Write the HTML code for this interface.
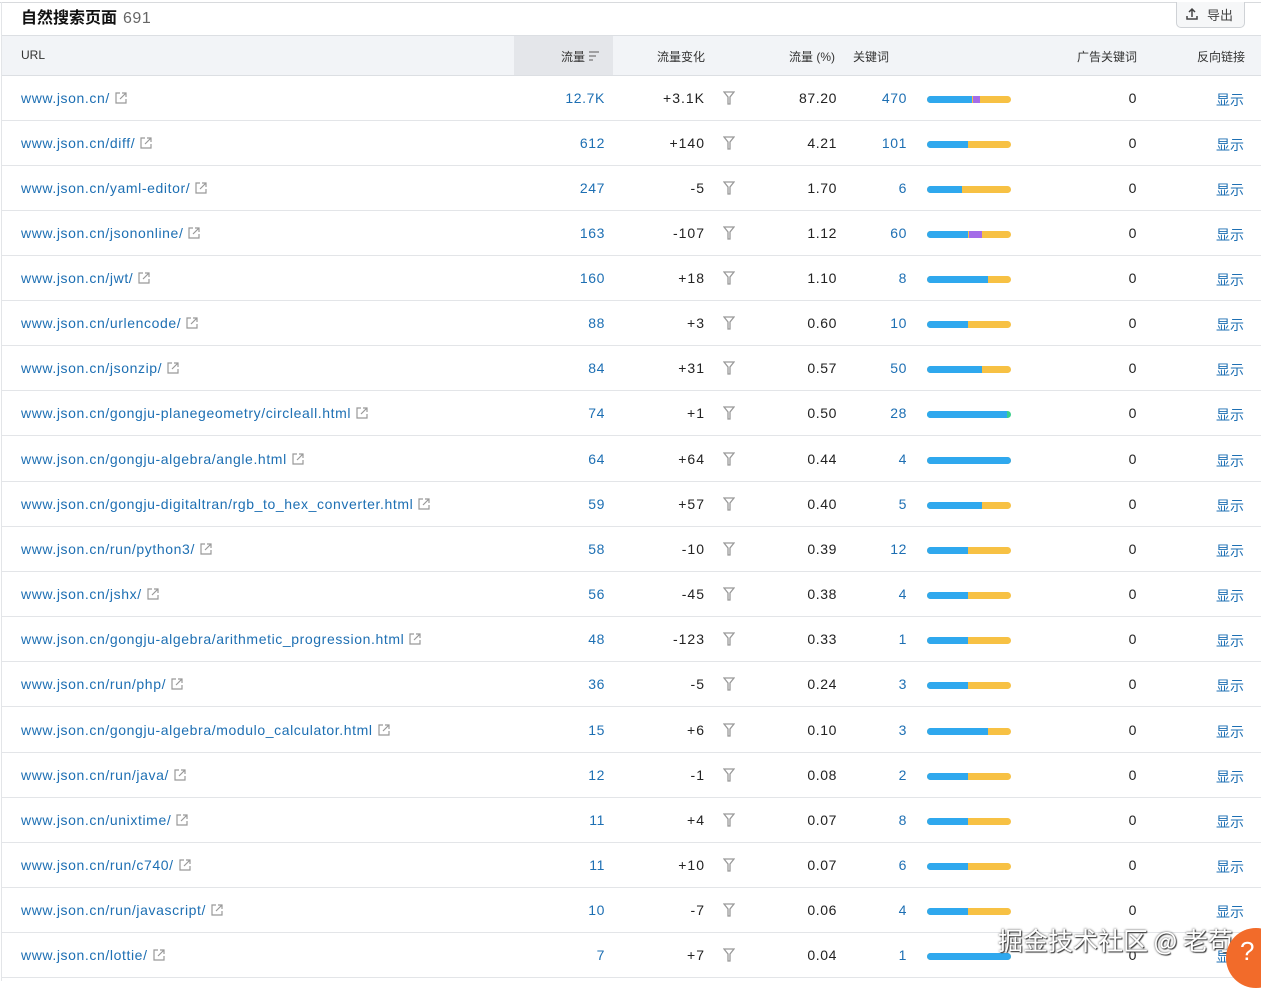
<!DOCTYPE html>
<html><head><meta charset="utf-8"><style>
*{margin:0;padding:0;box-sizing:border-box}
body{width:1261px;height:981px;overflow:hidden;background:#fff;font-family:"Liberation Sans","Noto Sans CJK SC",sans-serif;color:#222;position:relative}
.top{position:absolute;left:0;top:2px;width:1261px;height:1px;background:#d8dadd}
.lb{position:absolute;left:1px;top:2px;width:1px;height:979px;background:#e3e5e8}
.title{position:absolute;left:21px;top:4px;font-size:16px;font-weight:bold;color:#111}
.title span{font-weight:normal;color:#666;margin-left:6px;font-size:16px;letter-spacing:.5px}
.exp{position:absolute;left:1176px;top:2px;width:69px;height:26px;border:1px solid #cfd2d6;border-top:none;border-radius:0 0 5px 5px;background:#f6f7f8;font-size:13px;color:#444;padding:3px 0 0 30px}
.exp svg{position:absolute;left:8px;top:5px}
.hd{position:absolute;left:2px;top:35px;width:1259px;height:41px;background:#f2f4f7;border-top:1px solid #dcdfe3;border-bottom:1px solid #dcdfe3;font-size:12px;color:#333}
.hd span{position:absolute;top:12px}
.sort{position:absolute;left:512px;top:0;width:99px;height:39px;background:#e4e6ea}
.row{position:absolute;left:2px;width:1259px;height:45px;border-bottom:1px solid #e3e5e8;font-size:14px;letter-spacing:.6px}
.row span{position:absolute;top:14px;white-space:nowrap}
.u{left:19px;color:#1d6fb3}
.u svg{vertical-align:-2px;margin-left:4px}
.t{right:656px;color:#1d6fb3;text-align:right}
.c{right:556px;text-align:right;letter-spacing:1px}
.f{left:721px;top:15px!important}
.p{right:424px}
.k{right:354px;color:#1d6fb3}
.bar{position:absolute;left:925px;top:20px;width:84px;height:7px;border-radius:4px;background:#f7c144;overflow:hidden}
.bar i{position:absolute;left:0;top:0;height:7px;background:#2fa8ee}
.bar b{position:absolute;top:0;height:7px;background:#a46ce8}
.a{right:124px}
.s{right:17px;color:#1d6fb3;letter-spacing:0}
.wm{position:absolute;left:998px;top:922px;font-size:25px;color:#fff;text-shadow:0 0 2px #444,1px 1px 1px #333;font-family:"Noto Sans CJK SC",sans-serif}
.help{position:absolute;left:1226px;top:928px;width:60px;height:60px;border-radius:50%;background:#f26b2a;color:#fff;font-size:26px;padding:8px 0 0 14px}
</style></head><body>
<div class="top"></div><div class="lb"></div>
<div class="title">自然搜索页面<span>691</span></div>
<div class="exp"><svg width="14" height="14" viewBox="0 0 14 14" fill="none" stroke="#444" stroke-width="1.5"><path d="M7 10V2M4 5l3-3 3 3M2 9v3h10V9"/></svg>导出</div>
<div class="hd"><div class="sort"></div>
<span style="left:19px">URL</span>
<span style="left:559px">流量 <svg width="12" height="10" viewBox="0 0 12 10" stroke="#777" stroke-width="1.2"><path d="M1 1h10M1 5h7M1 9h4"/></svg></span>
<span style="left:655px">流量变化</span>
<span style="left:787px">流量 (%)</span>
<span style="left:851px">关键词</span>
<span style="left:1075px">广告关键词</span>
<span style="left:1195px">反向链接</span>
</div>

<div class="row" style="top:76px"><span class="u">www.json.cn/<svg width="14" height="14" viewBox="0 0 14 14" fill="none" stroke="#999" stroke-width="1.2"><path d="M6 2H2v10h10V8M8 2h4v4M12 2L6 8"/></svg></span><span class="t">12.7K</span><span class="c">+3.1K</span><span class="f"><svg width="12" height="14" viewBox="0 0 12 14" fill="none" stroke="#999" stroke-width="1.3"><path d="M1 1h10L7 6v7H5V6z"/></svg></span><span class="p">87.20</span><span class="k">470</span><div class="bar"><i style="width:45px"></i><b style="left:46px;width:7px"></b></div><span class="a">0</span><span class="s">显示</span></div>
<div class="row" style="top:121px"><span class="u">www.json.cn/diff/<svg width="14" height="14" viewBox="0 0 14 14" fill="none" stroke="#999" stroke-width="1.2"><path d="M6 2H2v10h10V8M8 2h4v4M12 2L6 8"/></svg></span><span class="t">612</span><span class="c">+140</span><span class="f"><svg width="12" height="14" viewBox="0 0 12 14" fill="none" stroke="#999" stroke-width="1.3"><path d="M1 1h10L7 6v7H5V6z"/></svg></span><span class="p">4.21</span><span class="k">101</span><div class="bar"><i style="width:41px"></i></div><span class="a">0</span><span class="s">显示</span></div>
<div class="row" style="top:166px"><span class="u">www.json.cn/yaml-editor/<svg width="14" height="14" viewBox="0 0 14 14" fill="none" stroke="#999" stroke-width="1.2"><path d="M6 2H2v10h10V8M8 2h4v4M12 2L6 8"/></svg></span><span class="t">247</span><span class="c">-5</span><span class="f"><svg width="12" height="14" viewBox="0 0 12 14" fill="none" stroke="#999" stroke-width="1.3"><path d="M1 1h10L7 6v7H5V6z"/></svg></span><span class="p">1.70</span><span class="k">6</span><div class="bar"><i style="width:35px"></i></div><span class="a">0</span><span class="s">显示</span></div>
<div class="row" style="top:211px"><span class="u">www.json.cn/jsononline/<svg width="14" height="14" viewBox="0 0 14 14" fill="none" stroke="#999" stroke-width="1.2"><path d="M6 2H2v10h10V8M8 2h4v4M12 2L6 8"/></svg></span><span class="t">163</span><span class="c">-107</span><span class="f"><svg width="12" height="14" viewBox="0 0 12 14" fill="none" stroke="#999" stroke-width="1.3"><path d="M1 1h10L7 6v7H5V6z"/></svg></span><span class="p">1.12</span><span class="k">60</span><div class="bar"><i style="width:41px"></i><b style="left:42px;width:13px"></b></div><span class="a">0</span><span class="s">显示</span></div>
<div class="row" style="top:256px"><span class="u">www.json.cn/jwt/<svg width="14" height="14" viewBox="0 0 14 14" fill="none" stroke="#999" stroke-width="1.2"><path d="M6 2H2v10h10V8M8 2h4v4M12 2L6 8"/></svg></span><span class="t">160</span><span class="c">+18</span><span class="f"><svg width="12" height="14" viewBox="0 0 12 14" fill="none" stroke="#999" stroke-width="1.3"><path d="M1 1h10L7 6v7H5V6z"/></svg></span><span class="p">1.10</span><span class="k">8</span><div class="bar"><i style="width:61px"></i></div><span class="a">0</span><span class="s">显示</span></div>
<div class="row" style="top:301px"><span class="u">www.json.cn/urlencode/<svg width="14" height="14" viewBox="0 0 14 14" fill="none" stroke="#999" stroke-width="1.2"><path d="M6 2H2v10h10V8M8 2h4v4M12 2L6 8"/></svg></span><span class="t">88</span><span class="c">+3</span><span class="f"><svg width="12" height="14" viewBox="0 0 12 14" fill="none" stroke="#999" stroke-width="1.3"><path d="M1 1h10L7 6v7H5V6z"/></svg></span><span class="p">0.60</span><span class="k">10</span><div class="bar"><i style="width:41px"></i></div><span class="a">0</span><span class="s">显示</span></div>
<div class="row" style="top:346px"><span class="u">www.json.cn/jsonzip/<svg width="14" height="14" viewBox="0 0 14 14" fill="none" stroke="#999" stroke-width="1.2"><path d="M6 2H2v10h10V8M8 2h4v4M12 2L6 8"/></svg></span><span class="t">84</span><span class="c">+31</span><span class="f"><svg width="12" height="14" viewBox="0 0 12 14" fill="none" stroke="#999" stroke-width="1.3"><path d="M1 1h10L7 6v7H5V6z"/></svg></span><span class="p">0.57</span><span class="k">50</span><div class="bar"><i style="width:55px"></i></div><span class="a">0</span><span class="s">显示</span></div>
<div class="row" style="top:391px"><span class="u">www.json.cn/gongju-planegeometry/circleall.html<svg width="14" height="14" viewBox="0 0 14 14" fill="none" stroke="#999" stroke-width="1.2"><path d="M6 2H2v10h10V8M8 2h4v4M12 2L6 8"/></svg></span><span class="t">74</span><span class="c">+1</span><span class="f"><svg width="12" height="14" viewBox="0 0 12 14" fill="none" stroke="#999" stroke-width="1.3"><path d="M1 1h10L7 6v7H5V6z"/></svg></span><span class="p">0.50</span><span class="k">28</span><div class="bar" style="background:#3ccf8e"><i style="width:80px"></i></div><span class="a">0</span><span class="s">显示</span></div>
<div class="row" style="top:437px"><span class="u">www.json.cn/gongju-algebra/angle.html<svg width="14" height="14" viewBox="0 0 14 14" fill="none" stroke="#999" stroke-width="1.2"><path d="M6 2H2v10h10V8M8 2h4v4M12 2L6 8"/></svg></span><span class="t">64</span><span class="c">+64</span><span class="f"><svg width="12" height="14" viewBox="0 0 12 14" fill="none" stroke="#999" stroke-width="1.3"><path d="M1 1h10L7 6v7H5V6z"/></svg></span><span class="p">0.44</span><span class="k">4</span><div class="bar"><i style="width:84px"></i></div><span class="a">0</span><span class="s">显示</span></div>
<div class="row" style="top:482px"><span class="u">www.json.cn/gongju-digitaltran/rgb_to_hex_converter.html<svg width="14" height="14" viewBox="0 0 14 14" fill="none" stroke="#999" stroke-width="1.2"><path d="M6 2H2v10h10V8M8 2h4v4M12 2L6 8"/></svg></span><span class="t">59</span><span class="c">+57</span><span class="f"><svg width="12" height="14" viewBox="0 0 12 14" fill="none" stroke="#999" stroke-width="1.3"><path d="M1 1h10L7 6v7H5V6z"/></svg></span><span class="p">0.40</span><span class="k">5</span><div class="bar"><i style="width:55px"></i></div><span class="a">0</span><span class="s">显示</span></div>
<div class="row" style="top:527px"><span class="u">www.json.cn/run/python3/<svg width="14" height="14" viewBox="0 0 14 14" fill="none" stroke="#999" stroke-width="1.2"><path d="M6 2H2v10h10V8M8 2h4v4M12 2L6 8"/></svg></span><span class="t">58</span><span class="c">-10</span><span class="f"><svg width="12" height="14" viewBox="0 0 12 14" fill="none" stroke="#999" stroke-width="1.3"><path d="M1 1h10L7 6v7H5V6z"/></svg></span><span class="p">0.39</span><span class="k">12</span><div class="bar"><i style="width:41px"></i></div><span class="a">0</span><span class="s">显示</span></div>
<div class="row" style="top:572px"><span class="u">www.json.cn/jshx/<svg width="14" height="14" viewBox="0 0 14 14" fill="none" stroke="#999" stroke-width="1.2"><path d="M6 2H2v10h10V8M8 2h4v4M12 2L6 8"/></svg></span><span class="t">56</span><span class="c">-45</span><span class="f"><svg width="12" height="14" viewBox="0 0 12 14" fill="none" stroke="#999" stroke-width="1.3"><path d="M1 1h10L7 6v7H5V6z"/></svg></span><span class="p">0.38</span><span class="k">4</span><div class="bar"><i style="width:41px"></i></div><span class="a">0</span><span class="s">显示</span></div>
<div class="row" style="top:617px"><span class="u">www.json.cn/gongju-algebra/arithmetic_progression.html<svg width="14" height="14" viewBox="0 0 14 14" fill="none" stroke="#999" stroke-width="1.2"><path d="M6 2H2v10h10V8M8 2h4v4M12 2L6 8"/></svg></span><span class="t">48</span><span class="c">-123</span><span class="f"><svg width="12" height="14" viewBox="0 0 12 14" fill="none" stroke="#999" stroke-width="1.3"><path d="M1 1h10L7 6v7H5V6z"/></svg></span><span class="p">0.33</span><span class="k">1</span><div class="bar"><i style="width:41px"></i></div><span class="a">0</span><span class="s">显示</span></div>
<div class="row" style="top:662px"><span class="u">www.json.cn/run/php/<svg width="14" height="14" viewBox="0 0 14 14" fill="none" stroke="#999" stroke-width="1.2"><path d="M6 2H2v10h10V8M8 2h4v4M12 2L6 8"/></svg></span><span class="t">36</span><span class="c">-5</span><span class="f"><svg width="12" height="14" viewBox="0 0 12 14" fill="none" stroke="#999" stroke-width="1.3"><path d="M1 1h10L7 6v7H5V6z"/></svg></span><span class="p">0.24</span><span class="k">3</span><div class="bar"><i style="width:41px"></i></div><span class="a">0</span><span class="s">显示</span></div>
<div class="row" style="top:708px"><span class="u">www.json.cn/gongju-algebra/modulo_calculator.html<svg width="14" height="14" viewBox="0 0 14 14" fill="none" stroke="#999" stroke-width="1.2"><path d="M6 2H2v10h10V8M8 2h4v4M12 2L6 8"/></svg></span><span class="t">15</span><span class="c">+6</span><span class="f"><svg width="12" height="14" viewBox="0 0 12 14" fill="none" stroke="#999" stroke-width="1.3"><path d="M1 1h10L7 6v7H5V6z"/></svg></span><span class="p">0.10</span><span class="k">3</span><div class="bar"><i style="width:61px"></i></div><span class="a">0</span><span class="s">显示</span></div>
<div class="row" style="top:753px"><span class="u">www.json.cn/run/java/<svg width="14" height="14" viewBox="0 0 14 14" fill="none" stroke="#999" stroke-width="1.2"><path d="M6 2H2v10h10V8M8 2h4v4M12 2L6 8"/></svg></span><span class="t">12</span><span class="c">-1</span><span class="f"><svg width="12" height="14" viewBox="0 0 12 14" fill="none" stroke="#999" stroke-width="1.3"><path d="M1 1h10L7 6v7H5V6z"/></svg></span><span class="p">0.08</span><span class="k">2</span><div class="bar"><i style="width:41px"></i></div><span class="a">0</span><span class="s">显示</span></div>
<div class="row" style="top:798px"><span class="u">www.json.cn/unixtime/<svg width="14" height="14" viewBox="0 0 14 14" fill="none" stroke="#999" stroke-width="1.2"><path d="M6 2H2v10h10V8M8 2h4v4M12 2L6 8"/></svg></span><span class="t">11</span><span class="c">+4</span><span class="f"><svg width="12" height="14" viewBox="0 0 12 14" fill="none" stroke="#999" stroke-width="1.3"><path d="M1 1h10L7 6v7H5V6z"/></svg></span><span class="p">0.07</span><span class="k">8</span><div class="bar"><i style="width:41px"></i></div><span class="a">0</span><span class="s">显示</span></div>
<div class="row" style="top:843px"><span class="u">www.json.cn/run/c740/<svg width="14" height="14" viewBox="0 0 14 14" fill="none" stroke="#999" stroke-width="1.2"><path d="M6 2H2v10h10V8M8 2h4v4M12 2L6 8"/></svg></span><span class="t">11</span><span class="c">+10</span><span class="f"><svg width="12" height="14" viewBox="0 0 12 14" fill="none" stroke="#999" stroke-width="1.3"><path d="M1 1h10L7 6v7H5V6z"/></svg></span><span class="p">0.07</span><span class="k">6</span><div class="bar"><i style="width:41px"></i></div><span class="a">0</span><span class="s">显示</span></div>
<div class="row" style="top:888px"><span class="u">www.json.cn/run/javascript/<svg width="14" height="14" viewBox="0 0 14 14" fill="none" stroke="#999" stroke-width="1.2"><path d="M6 2H2v10h10V8M8 2h4v4M12 2L6 8"/></svg></span><span class="t">10</span><span class="c">-7</span><span class="f"><svg width="12" height="14" viewBox="0 0 12 14" fill="none" stroke="#999" stroke-width="1.3"><path d="M1 1h10L7 6v7H5V6z"/></svg></span><span class="p">0.06</span><span class="k">4</span><div class="bar"><i style="width:41px"></i></div><span class="a">0</span><span class="s">显示</span></div>
<div class="row" style="top:933px"><span class="u">www.json.cn/lottie/<svg width="14" height="14" viewBox="0 0 14 14" fill="none" stroke="#999" stroke-width="1.2"><path d="M6 2H2v10h10V8M8 2h4v4M12 2L6 8"/></svg></span><span class="t">7</span><span class="c">+7</span><span class="f"><svg width="12" height="14" viewBox="0 0 12 14" fill="none" stroke="#999" stroke-width="1.3"><path d="M1 1h10L7 6v7H5V6z"/></svg></span><span class="p">0.04</span><span class="k">1</span><div class="bar"><i style="width:84px"></i></div><span class="a">0</span><span class="s">显示</span></div>

<div class="wm">掘金技术社区 @ 老苟</div>
<div class="help">?</div>
</body></html>
